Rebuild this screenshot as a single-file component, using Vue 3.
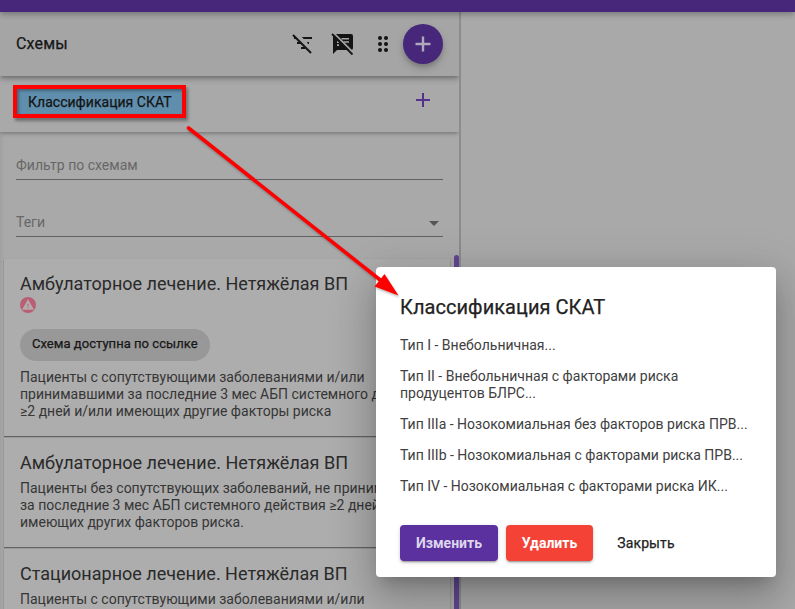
<script setup>
const schemes = [
  {
    title: 'Амбулаторное лечение. Нетяжёлая ВП',
    shared: true,
    lines: [
      'Пациенты с сопутствующими заболеваниями и/или',
      'принимавшими за последние 3 мес АБП системного д',
      '≥2 дней и/или имеющих другие факторы риска',
    ],
  },
  {
    title: 'Амбулаторное лечение. Нетяжёлая ВП',
    shared: false,
    lines: [
      'Пациенты без сопутствующих заболеваний, не приним',
      'за последние 3 мес АБП системного действия ≥2 дней',
      'имеющих других факторов риска.',
    ],
  },
  {
    title: 'Стационарное лечение. Нетяжёлая ВП',
    shared: false,
    lines: ['Пациенты с сопутствующими заболеваниями и/или'],
  },
]
const types = [
  ['Тип I - Внебольничная...'],
  ['Тип II - Внебольничная с факторами риска', 'продуцентов БЛРС...'],
  ['Тип IIIa - Нозокомиальная без факторов риска ПРВ...'],
  ['Тип IIIb - Нозокомиальная с факторами риска ПРВ...'],
  ['Тип IV - Нозокомиальная с факторами риска ИК...'],
]
</script>

<template>
  <div class="page">
    <div class="topbar"></div>
    <div class="body">
      <aside class="sidebar">
        <header class="head">
          <h1>Схемы</h1>
          <svg class="ic filter" viewBox="0 0 24 24">
            <path d="M10.8 5H21v2H12.8zM15.8 10H18v2H17.2zM6 10H8.7L10.7 12H6zM10 15H13.7L14 15.3V17H10zM3 5H3.7L5.7 7H3z" fill="#141414" />
            <path d="M2 3 20 21" stroke="#141414" stroke-width="2" />
          </svg>
          <svg class="ic notes" viewBox="0 0 24 24">
            <path d="M3.5 2H20a2 2 0 0 1 2 2v12a2 2 0 0 1-2 2H6l-4 4V3.5z" fill="#141414" />
            <path d="M10.5 6H18v1.6h-7.5zM12.5 9.2H18v1.6h-5.5zM6 9.2h1.8V11H6zM6 12.2h2V14H6z" fill="#a5a5a5" />
            <path d="M2.8 1.2 22.8 21.2" stroke="#a5a5a5" stroke-width="1.8" />
            <path d="M1 2 21.5 22.5" stroke="#141414" stroke-width="1.8" />
          </svg>
          <svg class="ic dots" viewBox="0 0 24 24" fill="#141414">
            <circle cx="9" cy="6" r="2" /><circle cx="15" cy="6" r="2" />
            <circle cx="9" cy="12" r="2" /><circle cx="15" cy="12" r="2" />
            <circle cx="9" cy="18" r="2" /><circle cx="15" cy="18" r="2" />
          </svg>
          <button class="fab">
            <svg viewBox="0 0 24 24"><path d="M19.500 13.200h-6.300v6.300h-2.400v-6.300H4.500v-2.400h6.300V4.500h2.400v6.300h6.300z" fill="#b0a9bb" /></svg>
          </button>
        </header>
        <div class="sub">
          <span class="tag">Классификация СКАТ</span>
          <svg class="plus" viewBox="0 0 24 24"><path d="M19 13h-6v6h-2v-6H5v-2h6V5h2v6h6z" fill="#54318b" /></svg>
        </div>
        <div class="fields">
          <div class="field">Фильтр по схемам</div>
          <div class="field select">Теги<i class="caret"></i></div>
        </div>
        <div class="list">
          <div class="cards">
            <article v-for="(s, i) in schemes" :key="i" class="card">
              <h2>{{ s.title }}</h2>
              <template v-if="s.shared">
                <svg class="warn" viewBox="0 0 16 16">
                  <circle cx="8" cy="8" r="8" fill="#b85f74" />
                  <path d="M8 2.3 14 12.8H2z" fill="#b4aaad" />
                  <path d="M7.5 6.8h1v2.4h-1zM7.5 10.2h1v1h-1z" fill="#b85f74" />
                </svg>
                <div class="chip">Схема доступна по ссылке</div>
              </template>
              <p><span v-for="l in s.lines" :key="l">{{ l }}</span></p>
            </article>
          </div>
          <div class="thumb"></div>
        </div>
      </aside>
      <main class="canvas"></main>
    </div>

    <section class="dialog">
      <h3>Классификация СКАТ</h3>
      <p v-for="(t, i) in types" :key="i"><span v-for="l in t" :key="l">{{ l }}</span></p>
      <div class="actions">
        <button class="btn edit">Изменить</button>
        <button class="btn del">Удалить</button>
        <button class="btn close">Закрыть</button>
      </div>
    </section>

    <svg class="arrow" viewBox="0 0 795 609">
      <path d="M188.5 128 384 283" stroke="#f00" stroke-width="3.6" stroke-linecap="round" />
      <path d="M398.500 295.500 374.500 286.500 384.500 274z" fill="#f00" />
    </svg>
  </div>
</template>

<style>
body { margin: 0; overflow: hidden; }
</style>
<style scoped>
* { box-sizing: border-box; }
.page { position: relative; width: 795px; height: 609px; overflow: hidden; background: #a9a9a9; font-family: Roboto, sans-serif; color: #202020; display: flex; flex-direction: column; }
.topbar { height: 12px; flex: none; background: #47277a; position: relative; z-index: 3; box-shadow: 0 2px 4px -1px rgba(0,0,0,.14), 0 4px 5px rgba(0,0,0,.1), 0 1px 10px rgba(0,0,0,.08); }
.body { flex: 1; display: flex; min-height: 0; }
.sidebar { width: 461px; flex: none; border-right: 2px solid #8c8c8c; display: flex; flex-direction: column; overflow: hidden; box-shadow: inset 4px 0 4px -3px rgba(0,0,0,.08); }
.canvas { flex: 1; }
h1, h2, h3, p { margin: 0; font-weight: 400; }
.head { height: 64px; flex: none; display: flex; align-items: center; padding: 0 16px; background: #a5a5a5; box-shadow: 0 2px 4px -1px rgba(0,0,0,.25), 0 4px 5px rgba(0,0,0,.1), 0 1px 8px rgba(0,0,0,.12); position: relative; z-index: 2; }
h1, .tag, .chip, h3, .close { -webkit-text-stroke: .25px currentColor; }
h1 { font-size: 16px; letter-spacing: .15px; color: #161616; flex: 1; padding-bottom: 1px; }
.ic { width: 24px; height: 24px; fill-rule: evenodd; }
.notes { margin-left: 16px; }
.dots { margin: 0 8px 0 16px; }
.fab { width: 40px; height: 40px; border: 0; border-radius: 50%; padding: 8px; background: #47277a; box-shadow: 0 3px 5px -1px rgba(0,0,0,.2), 0 5px 8px rgba(0,0,0,.14); }
.fab svg { display: block; width: 24px; height: 24px; }
.sub { height: 56px; flex: none; display: flex; justify-content: space-between; align-items: flex-start; padding: 9px 24px 0 13px; background: #a9a9a9; box-shadow: 0 2px 4px -1px rgba(0,0,0,.25), 0 1px 5px rgba(0,0,0,.12); position: relative; z-index: 1; }
.tag { height: 33px; width: 173px; border: 4px solid #f00; background: #608fae; font-size: 14px; letter-spacing: .03px; line-height: 26px; padding-left: 11px; white-space: nowrap; color: #141414; box-shadow: 2px 3px 3px rgba(0,0,0,.35), inset 2px 2px 3px rgba(0,0,0,.3); }
.plus { width: 24px; height: 24px; margin-top: 3px; }
.fields { height: 123px; flex: none; padding: 19px 16px 0; }
.field { height: 29px; border-bottom: 1px solid #616161; font-size: 14px; line-height: 29px; color: #676767; }
.select { margin-top: 28px; display: flex; justify-content: space-between; align-items: center; }
.caret { border: 5px solid transparent; border-top-color: #555; border-bottom: 0; margin: 2px 4px 0 0; }
.list { flex: 1; min-height: 0; display: flex; overflow: hidden; }
.cards { width: 446px; margin: 4px 0 0 4px; }
.card { padding: 14px 16px 16px; background: #adadad; margin-bottom: 2px; box-shadow: 0 1px 1px rgba(0,0,0,.4), 0 0 1px rgba(0,0,0,.15); }
h2 { font-size: 18px; line-height: 22px; white-space: nowrap; color: #2a2a2a; }
.warn { width: 16px; height: 16px; display: block; margin: 2px 0 16px; }
.chip { width: 190px; height: 32px; border-radius: 16px; background: #989898; font-size: 13px; letter-spacing: .04px; line-height: 30px; padding-left: 12px; margin-bottom: 8px; white-space: nowrap; color: #161616; }
p span { display: block; white-space: nowrap; }
.card p { font-size: 14px; line-height: 17px; color: #363636; }
.card h2 + p { padding-top: 6px; }
.thumb { width: 5px; margin-left: 4px; border-radius: 3px 3px 0 0; background: #614693; }
.dialog { position: absolute; z-index: 5; left: 376px; top: 267px; width: 400px; height: 310px; border-radius: 4px; background: #fff; padding: 24px; box-shadow: 0 11px 15px -7px rgba(0,0,0,.2), 0 24px 38px 3px rgba(0,0,0,.14), 0 9px 46px 8px rgba(0,0,0,.12); }
h3 { font-size: 20px; line-height: 32px; letter-spacing: .05px; margin-bottom: 14px; white-space: nowrap; color: #222; }
.dialog p { font-size: 14px; line-height: 17px; margin-bottom: 14px; color: #404040; }
.actions { display: flex; gap: 8px; margin-top: 30px; }
.btn { height: 36px; border: 0; border-radius: 4px; padding: 0 0 1px; font-family: inherit; font-size: 14px; text-align: center; background: none; }
.edit { width: 98px; background: #5a319f; color: #ded6ec; font-weight: 700; box-shadow: 0 3px 1px -2px rgba(0,0,0,.2), 0 2px 2px rgba(0,0,0,.14), 0 1px 5px rgba(0,0,0,.12); }
.del { width: 87px; background: #f44336; color: #fff; font-weight: 700; box-shadow: 0 3px 1px -2px rgba(0,0,0,.2), 0 2px 2px rgba(0,0,0,.14), 0 1px 5px rgba(0,0,0,.12); }
.close { width: 90px; color: #222; letter-spacing: .1px; }
.arrow { position: absolute; z-index: 6; left: 0; top: 0; width: 795px; height: 609px; filter: drop-shadow(1px 2px 1px rgba(0,0,0,.25)); }
</style>
